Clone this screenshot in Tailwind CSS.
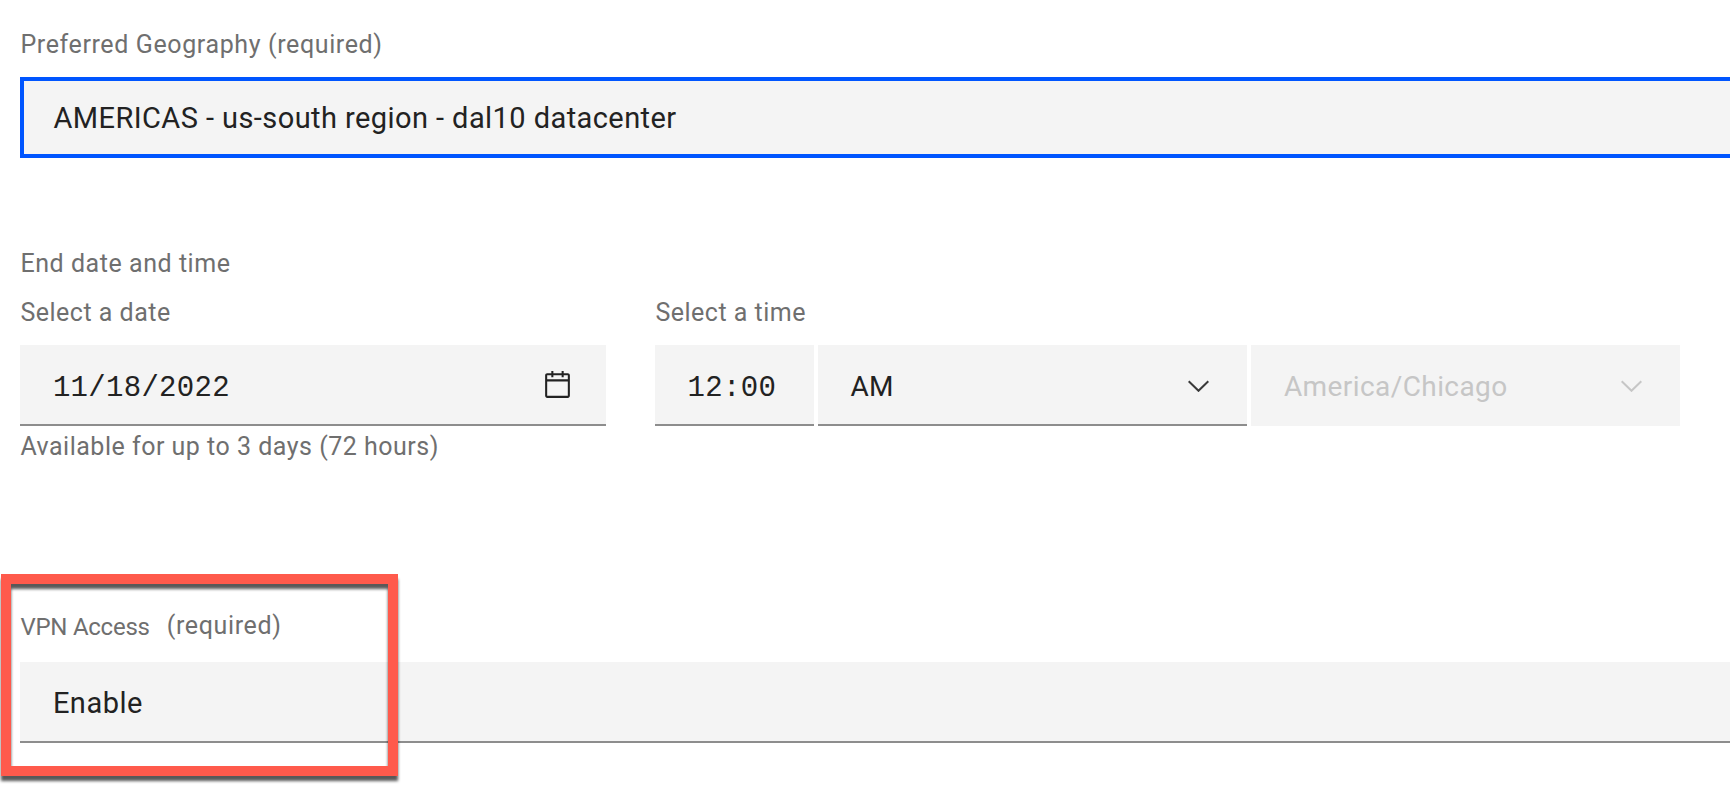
<!DOCTYPE html>
<html lang="en">
<head>
<meta charset="utf-8">
<title>Reservation form</title>
<script src="https://cdn.jsdelivr.net/npm/@tailwindcss/browser@4"></script>
</head>
<body class="h-[798px] overflow-hidden bg-white font-[Roboto,sans-serif] text-[#222222]">
<main class="relative flex h-full flex-col pt-[33px] pl-[20.4px] whitespace-nowrap">
  <label class="text-[25px] leading-6 tracking-[0.62px] text-[#6f6f6f]">Preferred Geography (required)</label>
  <div class="mt-5 -mr-2 flex h-[81px] items-center border-4 border-[#0055ff] bg-[#f4f4f4] pt-[3px] pl-[29px] text-[29px] tracking-[0.43px]">AMERICAS - us-south region - dal10 datacenter</div>

  <section class="mt-[94px]">
    <h2 class="text-[25px] leading-6 tracking-[0.55px] text-[#6f6f6f]">End date and time</h2>
    <div class="mt-[25px] flex items-start">
      <div class="w-[586px]">
        <label class="block text-[25px] leading-6 tracking-[0.5px] text-[#6f6f6f]">Select a date</label>
        <div class="mt-5 flex h-[81px] items-center justify-between border-b-2 border-[#8d8d8d] bg-[#f4f4f4] pr-8 pl-[32.5px]">
          <span class="pt-2 font-['Liberation_Mono',monospace] text-[29px] tracking-[0.3px]">11/18/2022</span>
          <svg class="mt-0.5 size-[33px]" viewBox="0 0 32 32" fill="currentColor"><path d="M26 4h-4V2h-2v2h-8V2h-2v2H6c-1.1 0-2 .9-2 2v20c0 1.100.9 2 2 2h20c1.100 0 2-.9 2-2V6c0-1.100-.9-2-2-2zm0 22H6V12h20v14zm0-16H6V6h4v2h2V6h8v2h2V6h4v4z"/></svg>
        </div>
        <p class="mt-[9px] text-[25px] leading-6 tracking-[0.5px] text-[#6f6f6f]">Available for up to 3 days (72 hours)</p>
      </div>
      <div class="ml-[49px]">
        <label class="block text-[25px] leading-6 tracking-[0.5px] text-[#6f6f6f]">Select a time</label>
        <div class="mt-5 flex gap-1">
          <div class="flex h-[81px] w-[159px] items-center border-b-2 border-[#8d8d8d] bg-[#f4f4f4] pl-8"><span class="pt-2 font-['Liberation_Mono',monospace] text-[29px] tracking-[0.4px]">12:00</span></div>
          <div class="flex h-[81px] w-[429px] items-center justify-between border-b-2 border-[#8d8d8d] bg-[#f4f4f4] pr-[38px] pl-8">
            <span class="pt-[5px] text-[28px] tracking-[0.3px]">AM</span>
            <svg class="mt-0.5 h-3 w-[21px]" viewBox="0 0 21 12" fill="none" stroke="#393939" stroke-width="2"><path d="M.7 1.200 10.500 10.800 20.300 1.200"/></svg>
          </div>
          <div class="flex h-[81px] w-[429px] items-center justify-between border-b-2 border-[#f4f4f4] bg-[#f4f4f4] pr-[38px] pl-[32.5px] text-[#c6c6c6]">
            <span class="pt-[5px] text-[28px] tracking-[0.42px]">America/Chicago</span>
            <svg class="mt-0.5 h-3 w-[21px]" viewBox="0 0 21 12" fill="none" stroke="currentColor" stroke-width="2"><path d="M.7 1.200 10.500 10.800 20.300 1.200"/></svg>
          </div>
        </div>
      </div>
    </div>
  </section>

  <section class="mt-[155px]">
    <label class="flex gap-[17px] text-[#6f6f6f]">
      <span class="pt-px text-2xl leading-6 tracking-[-0.25px]">VPN Access</span>
      <span class="text-[25px] leading-6 tracking-[0.65px]">(required)</span>
    </label>
    <div class="mt-[23px] flex h-[81px] items-center border-b-2 border-[#8d8d8d] bg-[#f4f4f4] pl-[32.5px]"><span class="pt-[5px] text-[29px] tracking-[0.5px]">Enable</span></div>
  </section>

  <div class="absolute top-[574px] left-px h-[202px] w-[397px] border-10 border-[#ff5a4c] drop-shadow-[0_5px_1.5px_rgba(0,0,0,0.65)]"></div>
</main>
</body>
</html>
